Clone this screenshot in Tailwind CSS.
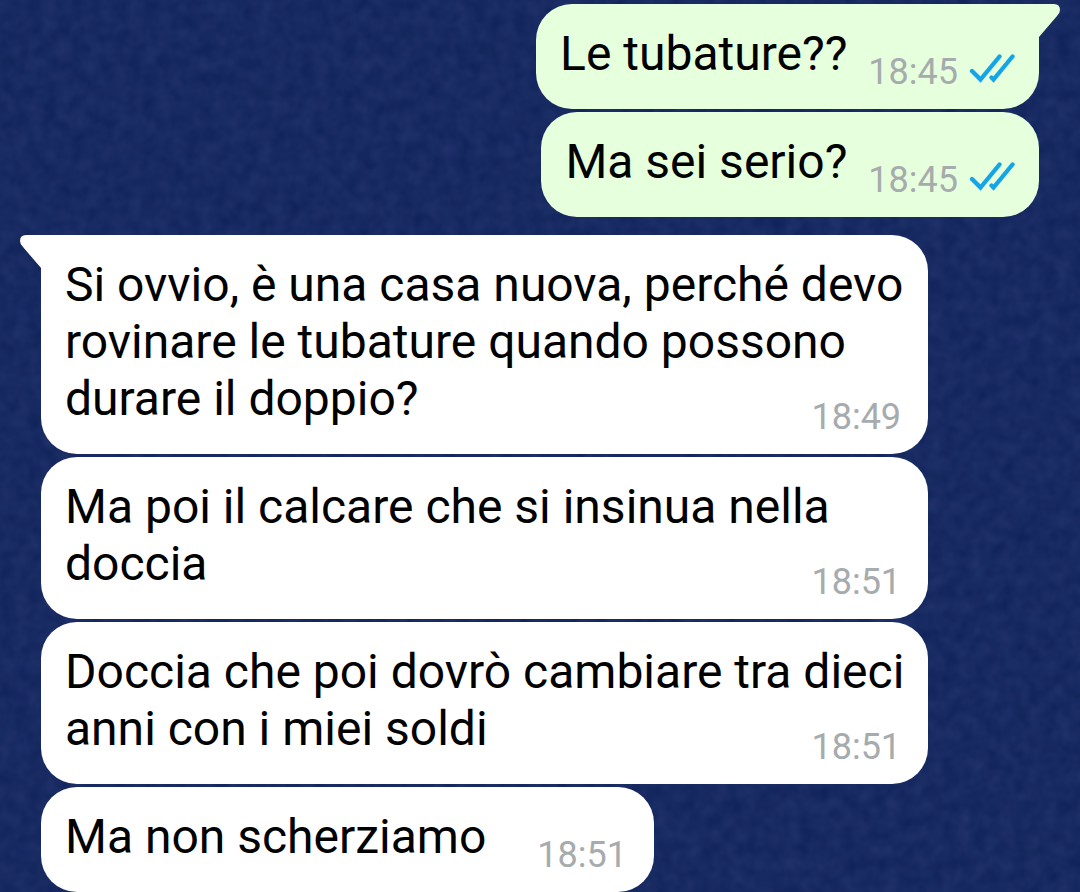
<!DOCTYPE html>
<html lang="it">
<head>
<meta charset="utf-8">
<meta name="viewport" content="width=device-width, initial-scale=1">
<title>Chat</title>
<script src="https://cdn.jsdelivr.net/npm/@tailwindcss/browser@4"></script>
</head>
<body class="relative min-h-screen overflow-x-hidden bg-[#182a62] font-[Roboto,sans-serif] text-[48px] leading-[57px] text-black">
  <!-- Fabric-like wallpaper grain -->
  <svg class="absolute inset-0 -z-10 size-full" aria-hidden="true">
    <filter id="grain" x="0" y="0" width="100%" height="100%" color-interpolation-filters="sRGB">
      <feTurbulence type="fractalNoise" baseFrequency="0.07" numOctaves="2" seed="4"/>
      <feColorMatrix values="0.08 0 0 0 0.054  0.07 0.02 0 0 0.12  0.08 0 0 0 0.344  0 0 0 0 1"/>
    </filter>
    <rect width="100%" height="100%" filter="url(#grain)"/>
  </svg>

  <main class="flex flex-col gap-[18px] px-[41px] pt-1">
    <section class="flex flex-col items-end gap-[3px]">
      <article class="relative flow-root max-w-8/9 rounded-[36px] rounded-tr-none bg-[#e6ffdc] px-6 pt-[21px] pb-4">
        <svg class="absolute top-0 left-full h-[34px] w-[21px] fill-[#e6ffdc]" viewBox="0 0 21 34" aria-hidden="true"><path d="M-1 0H15Q21 0 21 6Q21 9 18 12L0 33V34H-1Z"/></svg>
        <p>Le tubature??
          <span class="float-right mt-[26px] ml-[21px] flex items-center gap-[10px] text-[36px] leading-[42px] text-[#a6abad]"><time>18:45</time>
            <svg class="-mt-1 h-8 w-[47px] fill-none stroke-[#14a5e8]" viewBox="0 0 47 32" role="img" aria-label="Letto" stroke-width="4.300" stroke-linecap="round"><path d="M4 17L12.500 25.500L31.500 2.500M23.500 23.500L25.500 25.500L44.500 2.500"/></svg>
          </span>
        </p>
      </article>
      <article class="relative flow-root max-w-8/9 rounded-[36px] bg-[#e6ffdc] px-6 pt-[21px] pb-4">
        <p>Ma sei serio?
          <span class="float-right mt-[26px] ml-[21px] flex items-center gap-[10px] text-[36px] leading-[42px] text-[#a6abad]"><time>18:45</time>
            <svg class="-mt-1 h-8 w-[47px] fill-none stroke-[#14a5e8]" viewBox="0 0 47 32" role="img" aria-label="Letto" stroke-width="4.300" stroke-linecap="round"><path d="M4 17L12.500 25.500L31.500 2.500M23.500 23.500L25.500 25.500L44.500 2.500"/></svg>
          </span>
        </p>
      </article>
    </section>

    <section class="flex flex-col items-start gap-[3px]">
      <article class="relative flow-root max-w-8/9 rounded-[36px] rounded-tl-none bg-white pt-[21px] pr-5 pb-4 pl-6">
        <svg class="absolute top-0 right-full h-[34px] w-[21px] fill-white" viewBox="0 0 21 34" aria-hidden="true"><path d="M22 0H6Q0 0 0 6Q0 9 3 12L21 33V34H22Z"/></svg>
        <p>Si ovvio, è una casa nuova, perché devo rovinare le tubature quando possono durare il doppio?
          <time class="float-right mt-[26px] mr-[7px] ml-[51px] text-[36px] leading-[42px] text-[#a6abad]">18:49</time>
        </p>
      </article>
      <article class="relative flow-root max-w-8/9 rounded-[36px] bg-white pt-[21px] pr-5 pb-4 pl-6">
        <p>Ma poi il calcare che si insinua nella doccia
          <time class="float-right mt-[26px] mr-[7px] ml-[51px] text-[36px] leading-[42px] text-[#a6abad]">18:51</time>
        </p>
      </article>
      <article class="relative flow-root max-w-8/9 rounded-[36px] bg-white pt-[21px] pr-5 pb-4 pl-6">
        <p>Doccia che poi dovrò cambiare tra dieci anni con i miei soldi
          <time class="float-right mt-[26px] mr-[7px] ml-[51px] text-[36px] leading-[42px] text-[#a6abad]">18:51</time>
        </p>
      </article>
      <article class="relative flow-root max-w-8/9 rounded-[36px] bg-white pt-[21px] pr-5 pb-4 pl-6">
        <p>Ma non scherziamo
          <time class="float-right mt-[26px] mr-[7px] ml-[51px] text-[36px] leading-[42px] text-[#a6abad]">18:51</time>
        </p>
      </article>
    </section>
  </main>
</body>
</html>
